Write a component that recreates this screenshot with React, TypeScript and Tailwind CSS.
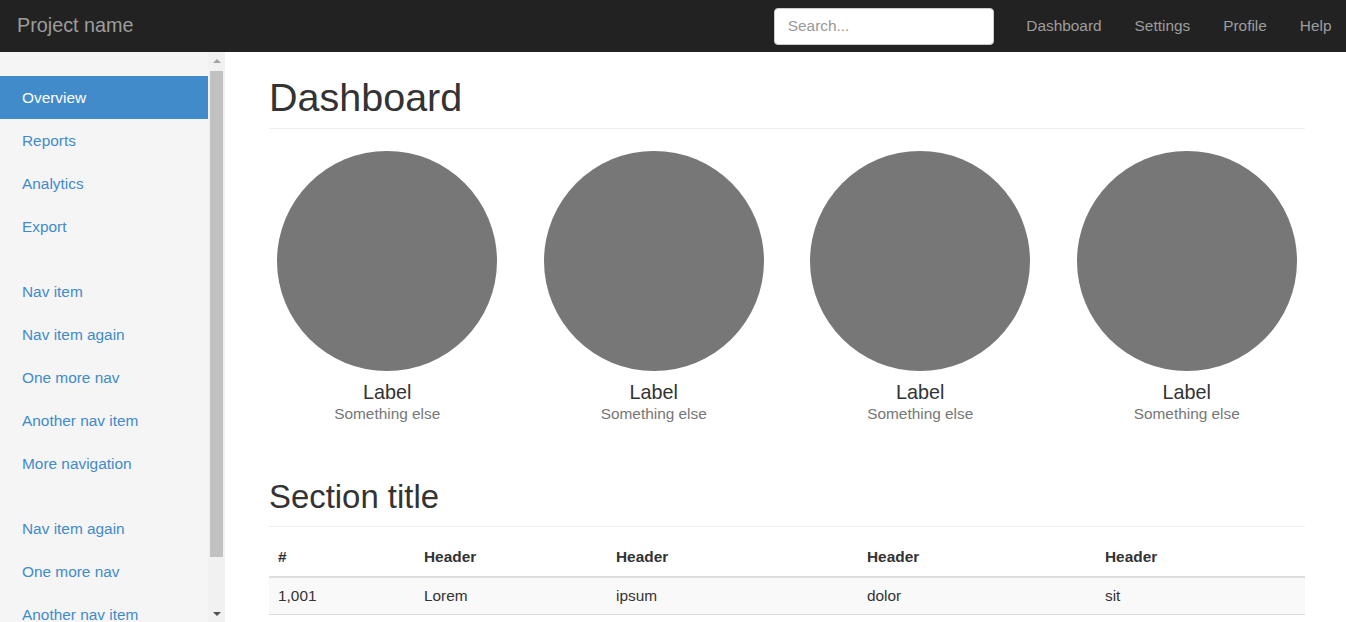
import React from 'react';

const navGroups = [
  ['Overview', 'Reports', 'Analytics', 'Export'],
  ['Nav item', 'Nav item again', 'One more nav', 'Another nav item', 'More navigation'],
  ['Nav item again', 'One more nav', 'Another nav item'],
];

const topLinks = ['Dashboard', 'Settings', 'Profile', 'Help'];

function Sidebar() {
  return (
    <aside className="w-[225px] flex bg-[#f5f5f5]">
      <nav className="w-[208px] overflow-hidden pt-[24px]">
        {navGroups.map((group, gi) => (
          <ul key={gi} className="mb-[22px]">
            {group.map((item, i) => {
              const active = gi === 0 && i === 0;
              return (
                <li key={item}>
                  <a
                    href="#"
                    className={`flex items-center h-[43px] pl-[22px] text-[15.4px] ${
                      active ? 'bg-[#428bca] text-white' : 'text-[#428bca]'
                    }`}
                  >
                    {item}
                  </a>
                </li>
              );
            })}
          </ul>
        ))}
      </nav>
      {/* classic scrollbar */}
      <div className="w-[17px] flex flex-col bg-[#f1f1f1]">
        <div className="h-[17px] flex items-center justify-center">
          <div className="w-0 h-0 border-x-[4px] border-x-transparent border-b-[4px] border-b-[#a3a3a3]" />
        </div>
        <div className="flex-1 pt-[2px]">
          <div className="mx-[2px] h-[486px] bg-[#c1c1c1]" />
        </div>
        <div className="h-[17px] flex items-center justify-center">
          <div className="w-0 h-0 border-x-[4px] border-x-transparent border-t-[4px] border-t-[#505050]" />
        </div>
      </div>
    </aside>
  );
}

function Placeholder() {
  return (
    <div className="flex flex-col items-center">
      <div className="w-[220px] h-[220px] rounded-full bg-[#777]" />
      <h4 className="mt-[10px] text-[19.8px] leading-[22px] text-[#333]">Label</h4>
      <span className="text-[15.4px] leading-[21px] text-[#777]">Something else</span>
    </div>
  );
}

export default function App() {
  return (
    <div className="h-screen flex flex-col overflow-hidden font-['Liberation_Sans',Arial,sans-serif] text-[#333]">
      <header className="h-[52px] shrink-0 bg-[#222] flex items-center justify-between pl-[17px]">
        <a href="#" className="text-[19.8px] text-[#9d9d9d]">
          Project name
        </a>
        <div className="flex items-center -mr-[2px]">
          <input
            type="text"
            placeholder="Search..."
            className="w-[220px] h-[37px] rounded-[4px] bg-white border border-[#ccc] px-[13px] text-[15.4px] placeholder:text-[#999] outline-none mr-[16px]"
          />
          {topLinks.map((l) => (
            <a key={l} href="#" className="px-[16.5px] text-[15.4px] text-[#9d9d9d]">
              {l}
            </a>
          ))}
        </div>
      </header>
      <div className="flex flex-1 min-h-0">
        <Sidebar />
        <main className="flex-1 overflow-hidden pl-[44px] pr-[41px] pt-[24px]">
          <h1 className="text-[39.5px] leading-[43px] pb-[9px] border-b border-[#eee]">Dashboard</h1>
          <div className="grid grid-cols-4 -mx-[15px] mt-[22px]">
            <Placeholder />
            <Placeholder />
            <Placeholder />
            <Placeholder />
          </div>
          <h2 className="mt-[55px] text-[32.9px] leading-[36px] pb-[11px] border-b border-[#eee]">
            Section title
          </h2>
          <table className="w-full table-fixed mt-[11px] text-[15.4px]">
            <thead>
              <tr className="border-b-2 border-[#ddd]">
                <th className="w-[146px] h-[39px] pl-[9px] text-left font-bold">#</th>
                <th className="w-[192px] pl-[9px] text-left font-bold">Header</th>
                <th className="w-[251px] pl-[9px] text-left font-bold">Header</th>
                <th className="w-[238px] pl-[9px] text-left font-bold">Header</th>
                <th className="pl-[9px] text-left font-bold">Header</th>
              </tr>
            </thead>
            <tbody>
              <tr className="bg-[#f9f9f9] border-b border-[#ddd]">
                <td className="h-[37px] pl-[9px]">1,001</td>
                <td className="pl-[9px]">Lorem</td>
                <td className="pl-[9px]">ipsum</td>
                <td className="pl-[9px]">dolor</td>
                <td className="pl-[9px]">sit</td>
              </tr>
            </tbody>
          </table>
        </main>
      </div>
    </div>
  );
}
